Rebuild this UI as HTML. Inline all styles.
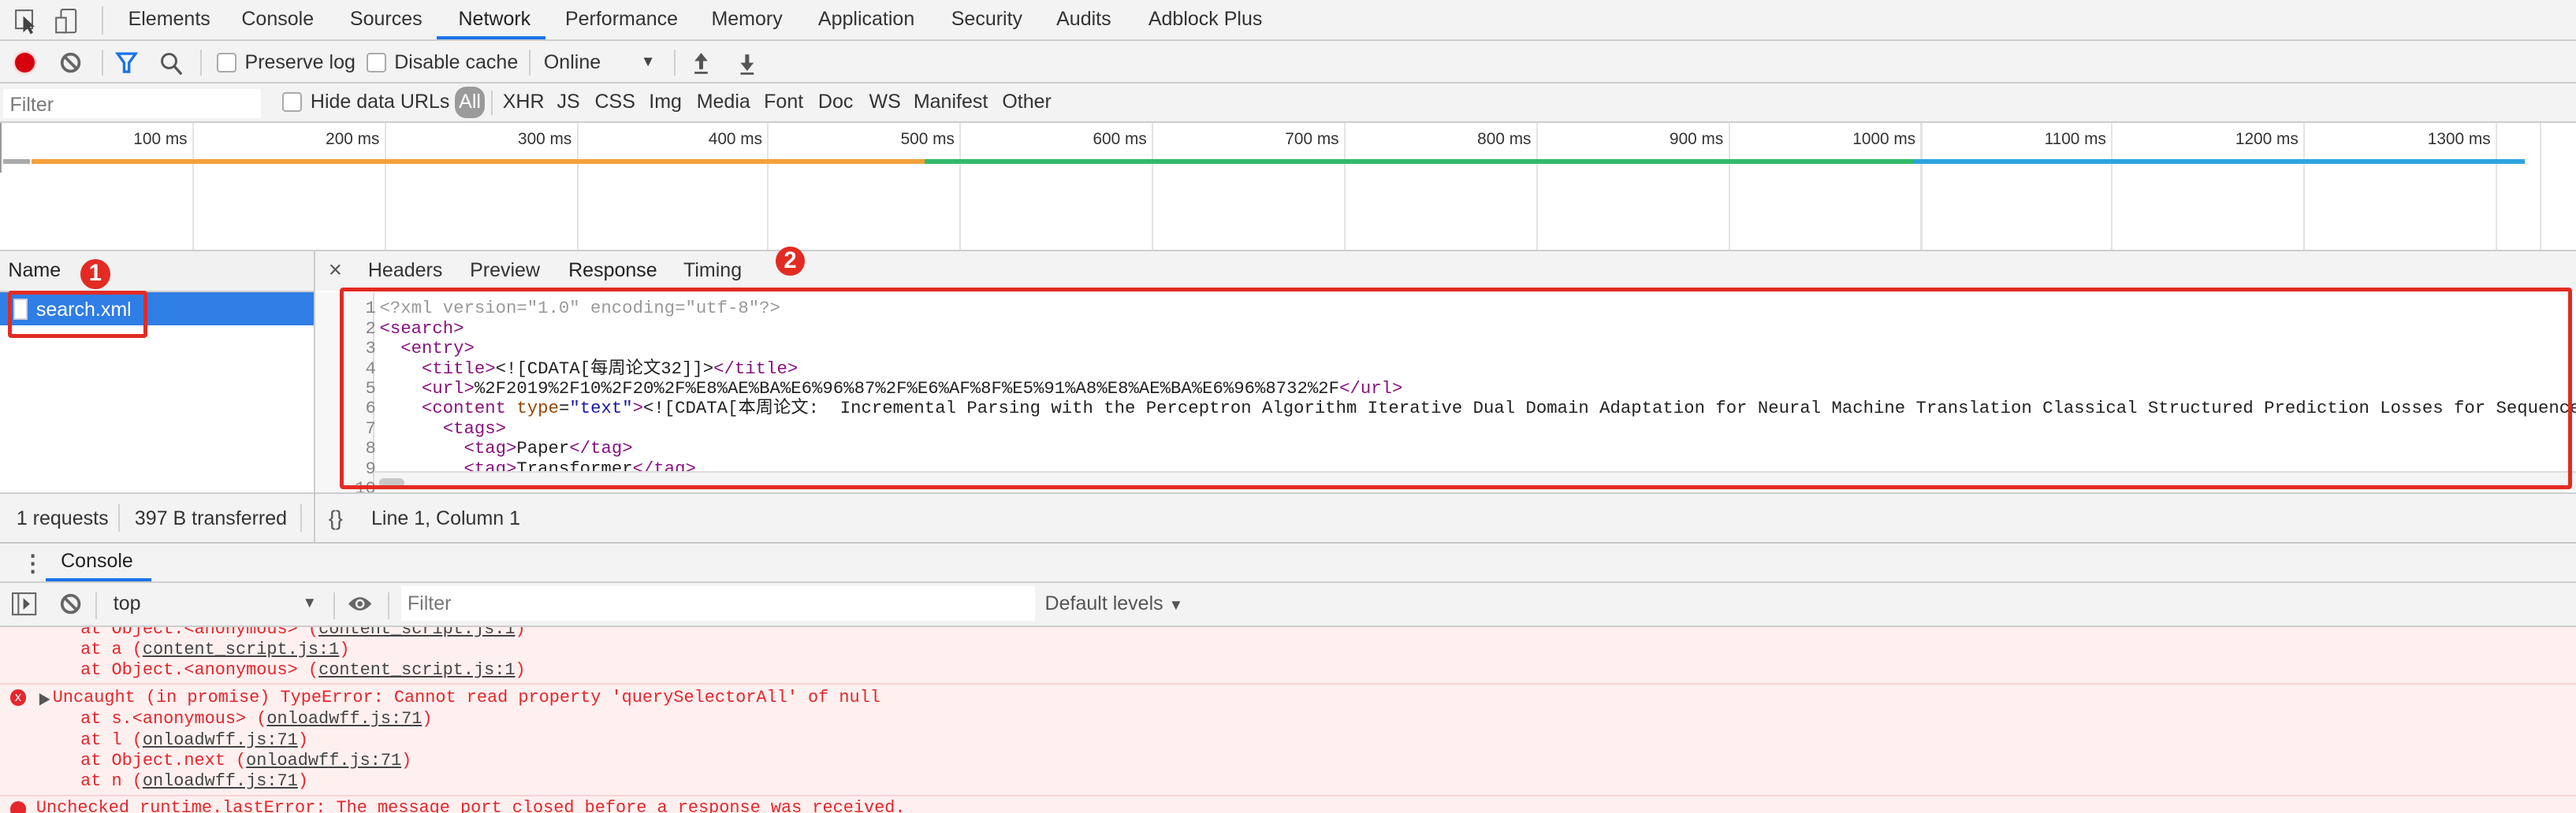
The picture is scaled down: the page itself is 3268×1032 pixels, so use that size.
<!DOCTYPE html>
<html><head><meta charset="utf-8">
<style>
html,body{margin:0;padding:0;background:#fff;overflow:hidden;width:3268px;height:1032px}
#r{zoom:2.0842;position:relative;width:1568px;height:495px;overflow:hidden;font-family:"Liberation Sans","Noto Sans CJK SC",sans-serif;font-size:12px;color:#333}
.a{position:absolute;white-space:nowrap}
.bar{position:absolute;left:0;width:1568px;background:#f3f3f3}
.hl{position:absolute;height:1px;background:#cdcdcd}
.vl{position:absolute;width:1px;background:#d0d0d0}
.mono{font-family:"Liberation Mono","Noto Sans CJK SC",monospace;font-size:10.7px;white-space:pre}
.cons{font-size:10.5px}
.cb{position:absolute;width:10px;height:10px;border:1px solid #aaa;border-radius:2px;background:#fff}
.tag{color:#881280}.at{color:#994500}.av{color:#1a1aa6}.cm{color:#999}
.red{color:#e5262b}
.u{text-decoration:underline;color:#444}
.circ{position:absolute;width:18px;height:18px;border-radius:50%;background:#e32b23;color:#fff;font-size:14px;text-align:center;line-height:18px;font-weight:bold}
</style></head><body><div id="r">
<div class="bar" style="top:0;height:24px"></div>
<div class="hl" style="top:24px;left:0;width:1568px"></div>
<svg class="a" style="left:8px;top:5px" width="44" height="16"><rect x="1.5" y="1.5" width="10" height="11" fill="none" stroke="#666"/><path d="M6 5 L6 15 L8.5 12.5 L10.5 16 L12 15 L10 11.5 L13 11.5 Z" fill="#444"/><rect x="29" y="1" width="9" height="14" rx="1" fill="none" stroke="#666"/><rect x="26" y="6" width="6" height="9" fill="#f3f3f3" stroke="#666"/></svg>
<div class="vl" style="left:62px;top:4px;height:17px"></div>
<div class="a" style="left:78px;top:5px">Elements</div>
<div class="a" style="left:147px;top:5px">Console</div>
<div class="a" style="left:213px;top:5px">Sources</div>
<div class="a" style="left:279px;top:5px;color:#222">Network</div>
<div class="a" style="left:266px;top:22px;width:66px;height:2px;background:#1a73e8"></div>
<div class="a" style="left:344px;top:5px">Performance</div>
<div class="a" style="left:433px;top:5px">Memory</div>
<div class="a" style="left:498px;top:5px">Application</div>
<div class="a" style="left:579px;top:5px">Security</div>
<div class="a" style="left:643px;top:5px">Audits</div>
<div class="a" style="left:699px;top:5px">Adblock Plus</div>
<div class="bar" style="top:25px;height:25px"></div>
<div class="hl" style="top:50px;left:0;width:1568px"></div>
<div class="a" style="left:9px;top:32px;width:12px;height:12px;border-radius:50%;background:#d7000f;box-shadow:0 0 2px #f88"></div>
<svg class="a" style="left:36px;top:31px" width="14" height="14"><circle cx="7" cy="7" r="5.2" fill="none" stroke="#666" stroke-width="1.8"/><line x1="3.5" y1="3.5" x2="10.5" y2="10.5" stroke="#666" stroke-width="1.8"/></svg>
<div class="vl" style="left:62px;top:30px;height:16px"></div>
<svg class="a" style="left:70px;top:31px" width="14" height="14"><path d="M1.5 1.5 H12.5 L8.5 7 V12.5 H5.5 V7 Z" fill="none" stroke="#1a73e8" stroke-width="1.6"/></svg>
<svg class="a" style="left:97px;top:31px" width="15" height="15"><circle cx="6" cy="6" r="4.3" fill="none" stroke="#555" stroke-width="1.4"/><line x1="9" y1="9" x2="13.5" y2="14" stroke="#555" stroke-width="1.6"/></svg>
<div class="vl" style="left:122px;top:30px;height:16px"></div>
<div class="cb" style="left:132px;top:32px"></div>
<div class="a" style="left:149px;top:31px">Preserve log</div>
<div class="cb" style="left:223px;top:32px"></div>
<div class="a" style="left:240px;top:31px">Disable cache</div>
<div class="vl" style="left:322px;top:30px;height:16px"></div>
<div class="a" style="left:331px;top:31px">Online</div>
<div class="a" style="left:390px;top:32px;font-size:9px;color:#444">▼</div>
<div class="vl" style="left:410px;top:30px;height:16px"></div>
<svg class="a" style="left:421px;top:31px" width="40" height="15"><path d="M6 1 L10 6 H7.2 V11 H4.8 V6 H2 Z" fill="#555"/><rect x="2" y="12.5" width="8" height="1.3" fill="#555"/><path d="M34 12 L38 7 H35.2 V2 H32.8 V7 H30 Z" fill="#555"/><rect x="30" y="13" width="8" height="1.3" fill="#555"/></svg>
<div class="bar" style="top:51px;height:23px"></div>
<div class="hl" style="top:74px;left:0;width:1568px"></div>
<div class="a" style="left:2px;top:54px;width:157px;height:18px;background:#fff"></div>
<div class="a" style="left:6px;top:57px;color:#777">Filter</div>
<div class="cb" style="left:172px;top:56px"></div>
<div class="a" style="left:189px;top:55px">Hide data URLs</div>
<div class="a" style="left:277px;top:53px;width:18px;height:19px;border-radius:7px;background:#9a9a9a;color:#fff;text-align:center;line-height:19px">All</div>
<div class="vl" style="left:299px;top:55px;height:15px"></div>
<div class="a" style="left:306px;top:55px">XHR</div>
<div class="a" style="left:339px;top:55px">JS</div>
<div class="a" style="left:362px;top:55px">CSS</div>
<div class="a" style="left:395px;top:55px">Img</div>
<div class="a" style="left:424px;top:55px">Media</div>
<div class="a" style="left:465px;top:55px">Font</div>
<div class="a" style="left:498px;top:55px">Doc</div>
<div class="a" style="left:529px;top:55px">WS</div>
<div class="a" style="left:556px;top:55px">Manifest</div>
<div class="a" style="left:610px;top:55px">Other</div>
<div class="a" style="left:0;top:75px;width:1568px;height:77px;background:#fff"></div>
<div class="vl" style="left:0;top:75px;height:30px;background:#999"></div>
<div id="tl"></div>
<div class="a" style="left:2px;top:97px;width:16px;height:3px;background:#aaa"></div>
<div class="a" style="left:19px;top:97px;width:544px;height:3px;background:#f4a03b"></div>
<div class="a" style="left:563px;top:97px;width:602px;height:3px;background:#33b967"></div>
<div class="a" style="left:1165px;top:97px;width:372px;height:3px;background:#2ea4dd"></div>
<div class="hl" style="top:152px;left:0;width:1568px;background:#cdcdcd"></div>
<div class="a" style="left:0;top:153px;width:191px;height:24px;background:#f1f1f1"></div>
<div class="hl" style="top:177px;left:0;width:191px"></div>
<div class="a" style="left:5px;top:158px;color:#222">Name</div>
<div class="a" style="left:0;top:178px;width:191px;height:20px;background:#2f7ee6"></div>
<div class="a" style="left:8px;top:182px;width:7px;height:11px;background:#fff;border:1px solid #ccd"></div>
<div class="a" style="left:22px;top:182px;color:#fff">search.xml</div>
<div class="a" style="left:5px;top:177px;width:80px;height:24px;border:2.5px solid #e32b23;border-radius:2px"></div>
<div class="circ" style="left:49px;top:158px">1</div>
<div class="vl" style="left:191px;top:153px;height:177px;background:#cdcdcd"></div>
<div class="a" style="left:192px;top:153px;width:1376px;height:24px;background:#f3f3f3"></div>
<div class="a" style="left:200px;top:157px;font-size:14px;color:#555">×</div>
<div class="a" style="left:224px;top:158px">Headers</div>
<div class="a" style="left:286px;top:158px">Preview</div>
<div class="a" style="left:346px;top:158px;color:#222">Response</div>
<div class="a" style="left:337px;top:175px;width:83px;height:2px;background:#1a73e8"></div>
<div class="a" style="left:416px;top:158px">Timing</div>
<div class="circ" style="left:472px;top:150px">2</div>
<div class="a" style="left:192px;top:178px;width:1376px;height:122px;background:#fff"></div>
<div class="a" style="left:192px;top:178px;width:35px;height:122px;background:#f7f7f7;border-right:1px solid #ddd"></div>
<div class="a mono" style="left:216px;top:182px;line-height:12.2px;color:#888;text-align:right">1
2
3
4
5
6
7
8
9
10</div>
<div class="a mono" style="left:231px;top:182px;line-height:12.2px;color:#222"><span class="cm">&lt;?xml version="1.0" encoding="utf-8"?&gt;</span>
<span class="tag">&lt;search&gt;</span>
  <span class="tag">&lt;entry&gt;</span>
    <span class="tag">&lt;title&gt;</span>&lt;![CDATA[每周论文32]]&gt;<span class="tag">&lt;/title&gt;</span>
    <span class="tag">&lt;url&gt;</span>%2F2019%2F10%2F20%2F%E8%AE%BA%E6%96%87%2F%E6%AF%8F%E5%91%A8%E8%AE%BA%E6%96%8732%2F<span class="tag">&lt;/url&gt;</span>
    <span class="tag">&lt;content </span><span class="at">type</span>=<span class="av">"text"</span><span class="tag">&gt;</span>&lt;![CDATA[本周论文:  Incremental Parsing with the Perceptron Algorithm Iterative Dual Domain Adaptation for Neural Machine Translation Classical Structured Prediction Losses for Sequence to
      <span class="tag">&lt;tags&gt;</span>
        <span class="tag">&lt;tag&gt;</span>Paper<span class="tag">&lt;/tag&gt;</span>
        <span class="tag">&lt;tag&gt;</span>Transformer<span class="tag">&lt;/tag&gt;</span></div>
<div class="a" style="left:228px;top:287px;width:1340px;height:11px;background:#f5f5f5;border-top:1px solid #ddd"></div>
<div class="a" style="left:231px;top:291px;width:15px;height:6px;border-radius:3px;background:#c8c8c8"></div>
<div class="a" style="left:207px;top:175px;width:1354px;height:118px;border:2.5px solid #e32b23;border-radius:2px"></div>
<div class="a" style="left:0;top:301px;width:1568px;height:29px;background:#f3f3f3"></div>
<div class="hl" style="top:300px;left:0;width:1568px"></div>
<div class="vl" style="left:191px;top:301px;height:29px;background:#cdcdcd"></div>
<div class="a" style="left:10px;top:309px">1 requests</div>
<div class="vl" style="left:72px;top:307px;height:17px"></div>
<div class="a" style="left:82px;top:309px">397 B transferred</div>
<div class="vl" style="left:183px;top:307px;height:17px"></div>
<div class="a" style="left:200px;top:308px;font-size:13px;color:#555">{}</div>
<div class="a" style="left:226px;top:309px">Line 1, Column 1</div>
<div class="hl" style="top:330px;left:0;width:1568px;background:#c8c8c8"></div>
<div class="bar" style="top:331px;height:23px"></div>
<div class="hl" style="top:354px;left:0;width:1568px"></div>
<div class="a" style="left:13px;top:335px;font-size:14px;color:#555;font-weight:bold">⋮</div>
<div class="a" style="left:37px;top:335px;color:#222">Console</div>
<div class="a" style="left:28px;top:352px;width:64px;height:2px;background:#1a73e8"></div>
<div class="a" style="left:0;top:382px;width:1568px;height:113px;background:#fff0f0"></div>
<div class="a mono red cons" style="left:49px;top:377px;line-height:12.6px">at Object.&lt;anonymous&gt; (<span class="u">content_script.js:1</span>)
at a (<span class="u">content_script.js:1</span>)
at Object.&lt;anonymous&gt; (<span class="u">content_script.js:1</span>)</div>
<div class="bar" style="top:355px;height:26px"></div>
<div class="hl" style="top:381px;left:0;width:1568px"></div>
<svg class="a" style="left:7px;top:361px" width="16" height="14"><rect x="0.5" y="0.5" width="14" height="13" fill="none" stroke="#666"/><line x1="4" y1="0.5" x2="4" y2="13.5" stroke="#666"/><path d="M7 3.5 L11 7 L7 10.5 Z" fill="#555"/></svg>
<svg class="a" style="left:36px;top:361px" width="14" height="14"><circle cx="7" cy="7" r="5.2" fill="none" stroke="#666" stroke-width="1.8"/><line x1="3.5" y1="3.5" x2="10.5" y2="10.5" stroke="#666" stroke-width="1.8"/></svg>
<div class="vl" style="left:58px;top:361px;height:16px"></div>
<div class="a" style="left:69px;top:361px">top</div>
<div class="a" style="left:184px;top:362px;font-size:9px;color:#555">▼</div>
<div class="vl" style="left:203px;top:361px;height:16px"></div>
<svg class="a" style="left:211px;top:362px" width="16" height="12"><path d="M1 6 Q8 -2 15 6 Q8 14 1 6 Z" fill="#666"/><circle cx="8" cy="6" r="2.8" fill="#f3f3f3"/><circle cx="8" cy="6" r="1.6" fill="#666"/></svg>
<div class="vl" style="left:236px;top:361px;height:16px"></div>
<div class="a" style="left:244px;top:357px;width:386px;height:21px;background:#fff"></div>
<div class="a" style="left:248px;top:361px;color:#777">Filter</div>
<div class="a" style="left:636px;top:361px;color:#555">Default levels <span style="font-size:9px">▼</span></div>
<div class="hl" style="top:416px;left:0;width:1568px;background:#fbd3d3"></div>
<div class="a" style="left:6px;top:420px;width:10px;height:10px;border-radius:50%;background:#e5262b;color:#fff;font-size:8px;line-height:10px;text-align:center">x</div>
<div class="a" style="left:23px;top:420px;font-size:8px;color:#555">▶</div>
<div class="a mono red cons" style="left:32px;top:419px;line-height:12.6px">Uncaught (in promise) TypeError: Cannot read property 'querySelectorAll' of null</div>
<div class="a mono red cons" style="left:49px;top:432px;line-height:12.6px">at s.&lt;anonymous&gt; (<span class="u">onloadwff.js:71</span>)
at l (<span class="u">onloadwff.js:71</span>)
at Object.next (<span class="u">onloadwff.js:71</span>)
at n (<span class="u">onloadwff.js:71</span>)</div>
<div class="hl" style="top:484px;left:0;width:1568px;background:#fbd3d3"></div>
<div class="a" style="left:6px;top:488px;width:10px;height:10px;border-radius:50%;background:#e5262b"></div>
<div class="a mono red cons" style="left:22px;top:486px">Unchecked runtime.lastError: The message port closed before a response was received.</div>
</div>
<script>
var tl=document.getElementById('tl'),h='';
for(var i=1;i<=13;i++){var x=Math.round(i*116.85);
h+='<div class="vl" style="left:'+x+'px;top:75px;height:77px;background:#e4e4e4"></div>';
h+='<div class="a" style="left:'+(x-60)+'px;width:57px;text-align:right;top:79px;font-size:10px;color:#333">'+(i*100)+' ms</div>';}
h+='<div class="vl" style="left:1546px;top:75px;height:77px;background:#e4e4e4"></div>';
tl.innerHTML=h;
</script>
</body></html>
